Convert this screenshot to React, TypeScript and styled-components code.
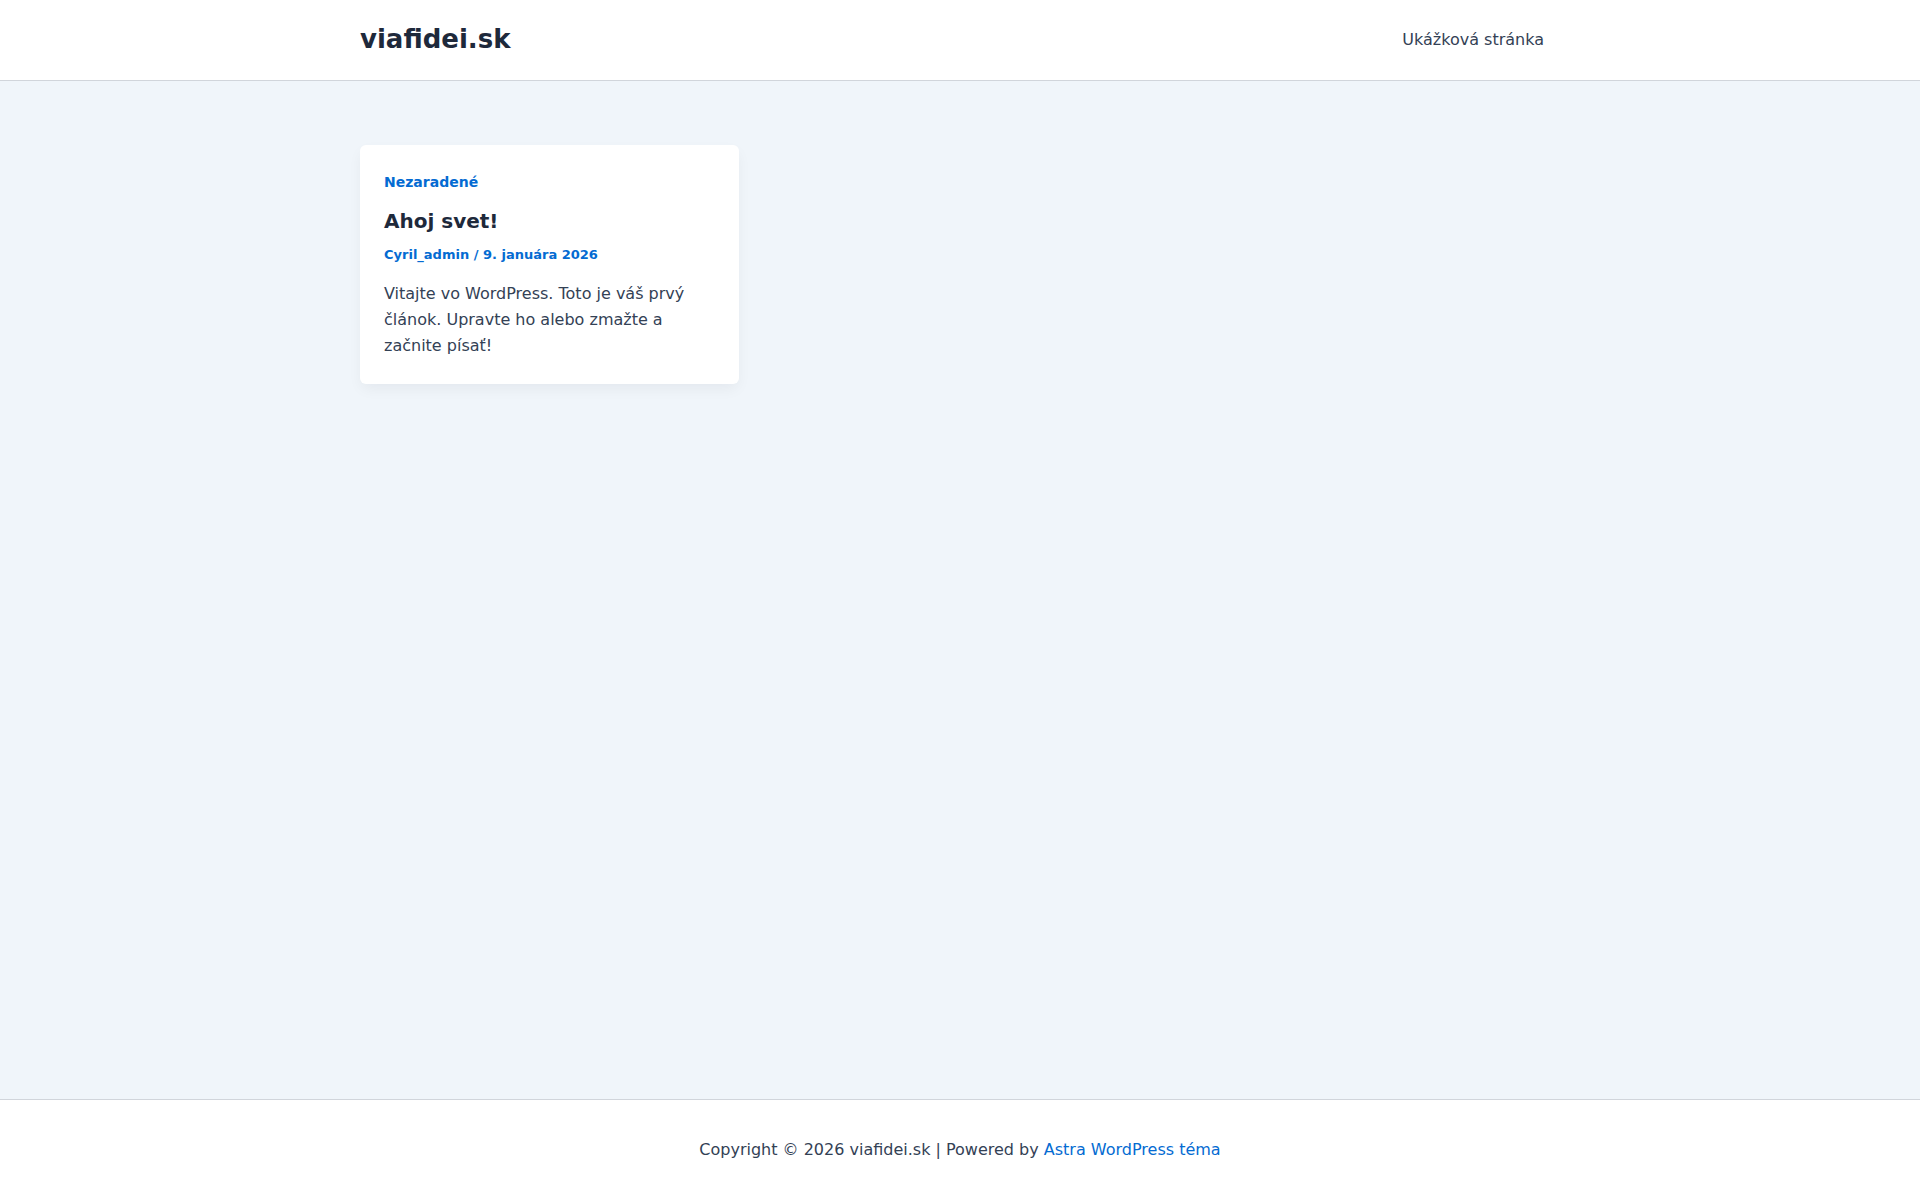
import styled, { createGlobalStyle } from "styled-components";

const GlobalStyle = createGlobalStyle`
  html, body {
    margin: 0;
    padding: 0;
  }
  body {
    font-family: "DejaVu Sans", "Noto Sans", sans-serif;
    color: #334155;
    background: #f0f5fa;
  }
  a {
    text-decoration: none;
  }
`;

const Page = styled.div`
  display: grid;
  grid-template-rows: auto 1fr auto;
  min-height: 100vh;
`;

const Header = styled.header`
  background: #ffffff;
  border-bottom: 1px solid #d1d5db;
`;

const HeaderInner = styled.div`
  width: 1200px;
  height: 80px;
  margin: 0 auto;
  display: flex;
  align-items: center;
  justify-content: space-between;
`;

const Logo = styled.a`
  font-size: 26px;
  font-weight: 700;
  color: #1e293b;
  line-height: 1;
  margin-top: -2px;
`;

const Nav = styled.nav`
  display: flex;
  align-items: center;
  margin-top: -2px;
`;

const NavItem = styled.a`
  padding: 0 16px;
  font-size: 16px;
  color: #334155;
`;

const Main = styled.main`
  width: 1200px;
  margin: 0 auto;
  padding-top: 64px;
  display: grid;
  grid-template-columns: repeat(3, 379px);
  align-content: start;
`;

const Card = styled.article`
  background: #ffffff;
  border-radius: 6px;
  box-shadow: 0px 6px 15px -2px rgba(16, 24, 40, 0.06);
  padding: 27px 24px 25px 24px;
`;

const Category = styled.a`
  display: block;
  font-size: 14px;
  font-weight: 700;
  line-height: 20px;
  color: #046bd2;
`;

const Title = styled.h2`
  margin: 16px 0 0 0;
  font-size: 20px;
  font-weight: 700;
  line-height: 26px;
  color: #1e293b;
`;

const Meta = styled.div`
  margin-top: 11px;
  font-size: 13px;
  font-weight: 700;
  line-height: 20px;
  color: #046bd2;
`;

const Excerpt = styled.p`
  margin: 16px 0 0 0;
  font-size: 16px;
  line-height: 26px;
  color: #334155;
`;

const Footer = styled.footer`
  background: #ffffff;
  border-top: 1px solid #d1d5db;
  height: 101px;
  box-sizing: border-box;
  padding-bottom: 2px;
  display: flex;
  align-items: center;
  justify-content: center;
  font-size: 16px;
  color: #334155;
`;

const FooterLink = styled.a`
  color: #046bd2;
`;

export default function App() {
  return (
    <>
      <GlobalStyle />
      <Page>
        <Header>
          <HeaderInner>
            <Logo href="#">viafidei.sk</Logo>
            <Nav>
              <NavItem href="#">Ukážková stránka</NavItem>
            </Nav>
          </HeaderInner>
        </Header>
        <Main>
          <Card>
            <Category href="#">Nezaradené</Category>
            <Title>Ahoj svet!</Title>
            <Meta>Cyril_admin / 9. januára 2026</Meta>
            <Excerpt>
              Vitajte vo WordPress. Toto je váš prvý článok. Upravte ho alebo
              zmažte a začnite písať!
            </Excerpt>
          </Card>
        </Main>
        <Footer>
          <span>
            Copyright © 2026 viafidei.sk | Powered by{" "}
            <FooterLink href="#">Astra WordPress téma</FooterLink>
          </span>
        </Footer>
      </Page>
    </>
  );
}
